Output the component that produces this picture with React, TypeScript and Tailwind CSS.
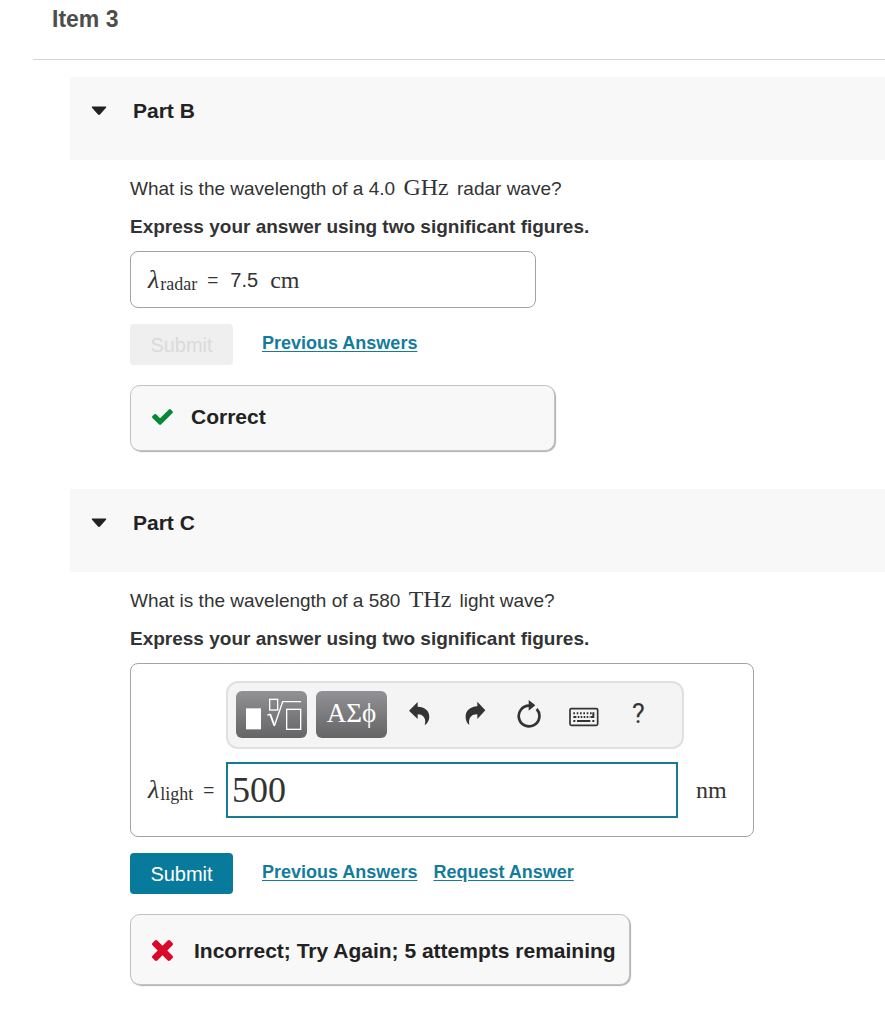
import { useState } from "react";
import type { ReactNode } from "react";

const MATH = "font-['Liberation_Serif',serif] text-[24px] leading-7";

export default function App() {
    return (
        <main className="min-h-screen bg-white pb-10 font-['Liberation_Sans',Arial,sans-serif] text-[19px] leading-7 text-[#333333]">
            <header className="ml-[33px] border-b border-[#d6d6d6] pb-[21px] pl-[19px]">
                <h1 className="text-[23px] leading-[38px] font-bold text-[#4d4d4d]">Item 3</h1>
            </header>

            <div className="mt-[17px] ml-[70px] flex flex-col gap-[38px]">
                <Part title="Part B">
                    <Question before="What is the wavelength of a 4.0" unit="GHz" after="radar wave?" />
                    <div className="mt-[10px] flex h-[57px] w-[406px] max-w-full items-center rounded-lg border border-[#a3a3a3] pl-[17px]">
                        <Lambda sub="radar" />
                        <span className="ml-[10px]">=</span>
                        <span className="ml-3 text-xl">7.5</span>
                        <span className={`ml-3 ${MATH}`}>cm</span>
                    </div>
                    <div className="mt-4 flex items-center">
                        <button type="button" disabled className="h-[41px] w-[103px] rounded-sm bg-[#efefef] text-xl text-[#dadada]">
                            Submit
                        </button>
                        <AnswerLink>Previous Answers</AnswerLink>
                    </div>
                    <div role="status" className="mt-5 flex h-[66px] w-[425px] max-w-full items-center rounded-[10px] border border-[#c2c2c2] bg-[#f8f8f8] pb-[2px] pl-[21px] shadow-[1px_1px_1px_#b0b0b0]">
                        <CheckIcon />
                        <span className="ml-[18px] text-[21px] font-bold text-[#222222]">Correct</span>
                    </div>
                </Part>

                <Part title="Part C">
                    <Question before="What is the wavelength of a 580" unit="THz" after="light wave?" />
                    <AnswerEditor />
                    <div className="mt-4 flex items-center">
                        <button type="button" className="h-[41px] w-[103px] rounded-sm bg-[#087a9c] text-xl text-white">
                            Submit
                        </button>
                        <AnswerLink>Previous Answers</AnswerLink>
                        <AnswerLink tight>Request Answer</AnswerLink>
                    </div>
                    <div role="status" className="mt-5 flex h-[71px] w-[500px] max-w-full items-center rounded-[10px] border border-[#c2c2c2] bg-[#f8f8f8] pt-[2px] pl-[21px] shadow-[1px_1px_1px_#b0b0b0]">
                        <CrossIcon />
                        <span className="ml-[21px] text-[21px] font-bold whitespace-nowrap text-[#222222]">
                            Incorrect; Try Again; 5 attempts remaining
                        </span>
                    </div>
                </Part>
            </div>
        </main>
    );
}

function Part({ title, children }: { title: string; children: ReactNode }) {
    const [open, setOpen] = useState(true);

    return (
        <section>
            <h2 className="bg-[#f8f8f8] pt-5 pb-[35px] pl-[21px]">
                <button
                    type="button"
                    aria-expanded={open}
                    onClick={() => setOpen(!open)}
                    className="flex items-center text-[21px] font-bold text-[#222222]"
                >
                    <svg width="16" height="10" viewBox="0 0 16 10" aria-hidden="true">
                        <path d="M1.5 .5h13q1.4 0 .5 1.2L9 8.6q-1 .8-2 0L1 1.700Q.1.5 1.500.5z" fill="currentColor" />
                    </svg>
                    <span className="ml-[26px]">{title}</span>
                </button>
            </h2>
            {open && <div className="pt-[13px] pl-[60px]">{children}</div>}
        </section>
    );
}

function Question({ before, unit, after }: { before: string; unit: string; after: string }) {
    return (
        <>
            <p>
                {before} <span className={`mx-[3px] ${MATH}`}>{unit}</span> {after}
            </p>
            <p className="mt-[10px] font-bold">Express your answer using two significant figures.</p>
        </>
    );
}

function Lambda({ sub }: { sub: string }) {
    return (
        <span className="flex items-end font-['Liberation_Serif',serif]">
            <i className="text-[26px] leading-7">λ</i>
            <span className="ml-px text-[18px] leading-5">{sub}</span>
        </span>
    );
}

function AnswerLink({ children, tight }: { children: ReactNode; tight?: boolean }) {
    return (
        <a
            href="#"
            className={`pb-[3px] text-lg leading-6 font-bold text-[#147c9b] underline underline-offset-2 ${tight ? "ml-4" : "ml-[29px]"}`}
        >
            {children}
        </a>
    );
}

function AnswerEditor() {
    return (
        <div className="mt-[10px] grid w-[624px] max-w-full grid-cols-[78px_458px_auto] items-center gap-y-[13px] rounded-lg border border-[#a3a3a3] pt-[17px] pb-[18px] pl-[17px]">
            <div role="toolbar" className="col-start-2 flex h-[68px] items-center rounded-xl border-2 border-[#e0e0e0] bg-[#f4f4f4] pb-[2px] pl-2 text-[#333333]">
                <button type="button" aria-label="Templates" className="rounded-md bg-linear-to-b from-[#929195] to-[#656566]">
                    <TemplateIcon />
                </button>
                <button
                    type="button"
                    aria-label="Symbols"
                    className="mr-1 ml-[9px] h-[47px] w-[71px] rounded-md bg-linear-to-b from-[#929195] to-[#656566] pb-[2px] font-['Liberation_Serif',serif] text-[27px] text-white"
                >
                    ΑΣϕ
                </button>
                <ToolButton label="Undo">
                    <svg width="22" height="26" viewBox="564 80 66 78" fill="currentColor">
                        <path d="M567 109L593 83V97C615 97 628 110 628 127C628 138 622 147 614 153C619 137 614 121 593 120V134Z" />
                    </svg>
                </ToolButton>
                <ToolButton label="Redo">
                    <svg width="22" height="26" viewBox="41 80 66 78" fill="currentColor" className="overflow-visible">
                        <path d="M108 108L84 82V96C62 97 48 110 49 128C49 139 53 147 60 152C57 135 62 120 84 120V134Z" />
                    </svg>
                </ToolButton>
                <ToolButton label="Reset">
                    <svg width="26" height="28" viewBox="199 77 78 84">
                        <path d="M261 104A31 31 0 1 1 238 94" fill="none" stroke="currentColor" strokeWidth="8" />
                        <path d="M237 77L257 93L237 109Z" fill="currentColor" />
                    </svg>
                </ToolButton>
                <ToolButton label="Keyboard">
                    <svg width="30" height="26" viewBox="358 80 90 78">
                        <rect x="361" y="103" width="83" height="50" rx="4" fill="none" stroke="currentColor" strokeWidth="5" />
                        <g stroke="currentColor" strokeWidth="6">
                            <path d="M371 117H426" strokeDasharray="5 5" />
                            <path d="M371 128H422" strokeDasharray="9 4 5 4 5 4 5 4 5 4" />
                            <path d="M371 140H377M382 140H422M428 140H434M423 128H434M431 114V131" />
                        </g>
                    </svg>
                </ToolButton>
                <ToolButton label="Help">
                    <span className="font-[Roboto,sans-serif] text-[27px]">?</span>
                </ToolButton>
            </div>

            <label htmlFor="light" className="col-start-1 flex items-center">
                <Lambda sub="light" />
                <span className="ml-[10px]">=</span>
            </label>
            <input
                id="light"
                type="text"
                defaultValue="500"
                className="h-14 w-[452px] border-2 border-[#147c95] bg-white pl-1 font-['Liberation_Serif',serif] text-[36px] outline-none"
            />
            <span className={`pl-3 ${MATH}`}>nm</span>
        </div>
    );
}

function ToolButton({ label, children }: { label: string; children: ReactNode }) {
    return (
        <button type="button" aria-label={label} className="flex h-12 w-[55px] items-center justify-center">
            {children}
        </button>
    );
}

function TemplateIcon() {
    return (
        <svg width="71" height="47" viewBox="48 47 213 141" fill="none" stroke="#ffffff" strokeWidth="4">
            <rect x="78" y="99" width="45" height="63" fill="#ffffff" stroke="none" />
            <rect x="149" y="72" width="24" height="32" />
            <path d="M142 120L150 116" />
            <path d="M150 116L163 150" strokeWidth="6" />
            <path d="M163 152L188 79H243" />
            <rect x="200" y="102" width="42" height="60" />
        </svg>
    );
}

function CheckIcon() {
    return (
        <svg width="21" height="16" viewBox="121 334 1550 1188" fill="#078738" aria-hidden="true">
            <path d="M1671 566q0 40-28 68l-724 724-136 136q-28 28-68 28t-68-28l-136-136-362-362q-28-28-28-68t28-68l136-136q28-28 68-28t68 28l294 295 656-657q28-28 68-28t68 28l136 136q28 28 28 68z" />
        </svg>
    );
}

function CrossIcon() {
    return (
        <svg width="21" height="21" viewBox="302 366 1188 1188" fill="#d9092c" aria-hidden="true">
            <path d="M1490 1322q0 40-28 68l-136 136q-28 28-68 28t-68-28l-294-294-294 294q-28 28-68 28t-68-28l-136-136q-28-28-28-68t28-68l294-294-294-294q-28-28-28-68t28-68l136-136q28-28 68-28t68 28l294 294 294-294q28-28 68-28t68 28l136 136q28 28 28 68t-28 68l-294 294 294 294q28 28 28 68z" />
        </svg>
    );
}
